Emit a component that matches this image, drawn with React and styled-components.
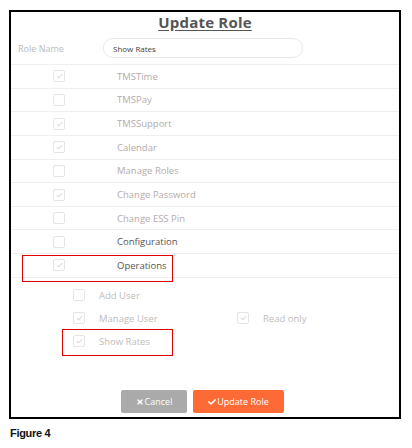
import React from "react";
import styled, { createGlobalStyle } from "styled-components";
import { FaTimes, FaCheck } from "react-icons/fa";

const Global = createGlobalStyle`
  body {
    margin: 0;
    background: #fff;
    font-family: "Open Sans", "Liberation Sans", sans-serif;
  }
`;

const Page = styled.div`
  width: 412px;
  height: 448px;
  padding: 10px 0 0 9px;
  box-sizing: border-box;
`;

const Frame = styled.div`
  width: 392px;
  height: 409px;
  border: 2px solid #000;
  box-sizing: border-box;
  display: flex;
  flex-direction: column;
`;

const Title = styled.h2`
  margin: 1px 0 0;
  text-align: center;
  font-size: 15px;
  line-height: 18px;
  font-weight: 700;
  color: #555;
  text-decoration: underline;
  text-underline-offset: 2px;
  letter-spacing: 0.2px;
`;

const NameRow = styled.div`
  display: flex;
  align-items: center;
  margin-top: 7px;
  padding-left: 7px;
  height: 20px;
  margin-bottom: 6px;
`;

const NameLabel = styled.label`
  width: 85px;
  font-size: 9px;
  color: #bbb;
`;

const NameInput = styled.div`
  width: 200px;
  height: 20px;
  box-sizing: border-box;
  border: 1px solid #e8e8e8;
  border-radius: 10px;
  padding-left: 9px;
  display: flex;
  align-items: center;
  font-size: 8px;
  color: #444;
`;

const Row = styled.div`
  position: relative;
  display: flex;
  align-items: center;
  height: 22.65px;
  border-top: 1px solid #efefef;
  padding-left: 42px;
`;

const Label = styled.span`
  margin-left: ${(p) => p.$gap || 52}px;
  font-size: 9.5px;
  color: ${(p) => (p.$dark ? "#555" : "#b5abab")};
  white-space: nowrap;
`;

const SubList = styled.div`
  border-top: 1px solid #efefef;
  padding-top: 6px;
`;

const SubRow = styled.div`
  position: relative;
  display: flex;
  align-items: center;
  height: 23px;
  padding-left: 62px;
`;

const Pair = styled.div`
  display: flex;
  align-items: center;
  width: ${(p) => (p.$w ? `${p.$w}px` : "auto")};
`;

const SubLabel = styled.span`
  margin-left: 14px;
  font-size: 9.5px;
  color: #bdbdbd;
  white-space: nowrap;
`;

const Box = styled.span`
  width: 12px;
  height: 12px;
  flex: none;
  box-sizing: border-box;
  border: 1px solid #e5e5e5;
  border-radius: 2px;
  display: flex;
  align-items: center;
  justify-content: center;
`;

const Mark = styled.div`
  position: absolute;
  left: ${(p) => p.$l}px;
  top: ${(p) => p.$t}px;
  width: ${(p) => p.$w}px;
  height: 27px;
  border: 1px solid #e00000;
  box-sizing: border-box;
  pointer-events: none;
`;

const Footer = styled.div`
  margin-top: auto;
  display: flex;
  justify-content: center;
  gap: 6px;
  padding: 0 5px 4px 0;
`;

const Button = styled.button`
  height: 23px;
  width: ${(p) => p.$w}px;
  border: none;
  border-radius: 2px;
  background: ${(p) => p.$bg};
  color: #fff;
  font-family: inherit;
  font-size: 9px;
  display: flex;
  align-items: center;
  justify-content: center;
  gap: 1px;
  padding: 0;
  svg {
    font-size: 8px;
  }
`;

const Caption = styled.div`
  margin-top: 8px;
  padding-left: 1px;
  font-family: "Liberation Sans", Arial, sans-serif;
  font-weight: 700;
  font-size: 11px;
  letter-spacing: -0.3px;
  color: #111;
`;

function Check({ on }) {
  return (
    <Box>
      {on && (
        <svg width="7" height="6" viewBox="0 0 7 6">
          <polyline
            points="0.8,3.2 2.7,4.8 6.2,1.2"
            fill="none"
            stroke="#c4c4c4"
            strokeWidth="0.9"
          />
        </svg>
      )}
    </Box>
  );
}

const perms = [
  { name: "TMSTime", on: true },
  { name: "TMSPay", on: false },
  { name: "TMSSupport", on: true },
  { name: "Calendar", on: true },
  { name: "Manage Roles", on: false },
  { name: "Change Password", on: true },
  { name: "Change ESS Pin", on: false },
  { name: "Configuration", on: false, dark: true },
  { name: "Operations", on: true, dark: true, mark: true },
];

export default function App() {
  return (
    <Page>
      <Global />
      <Frame>
        <Title>Update Role</Title>
        <NameRow>
          <NameLabel>Role Name</NameLabel>
          <NameInput>Show Rates</NameInput>
        </NameRow>
        {perms.map((p) => (
          <Row key={p.name}>
            <Check on={p.on} />
            <Label $dark={p.dark}>{p.name}</Label>
            {p.mark && <Mark $l={11} $t={1} $w={151} />}
          </Row>
        ))}
        <SubList>
          <SubRow>
            <Check />
            <SubLabel>Add User</SubLabel>
          </SubRow>
          <SubRow>
            <Pair $w={164}>
              <Check on />
              <SubLabel>Manage User</SubLabel>
            </Pair>
            <Pair>
              <Check on />
              <SubLabel>Read only</SubLabel>
            </Pair>
          </SubRow>
          <SubRow>
            <Check on />
            <SubLabel>Show Rates</SubLabel>
            <Mark $l={51} $t={-1} $w={111} />
          </SubRow>
        </SubList>
        <Footer>
          <Button $w={66} $bg="#aaaaaa">
            <FaTimes />
            Cancel
          </Button>
          <Button $w={91} $bg="#fe6a35">
            <FaCheck />
            Update Role
          </Button>
        </Footer>
      </Frame>
      <Caption>Figure 4</Caption>
    </Page>
  );
}
